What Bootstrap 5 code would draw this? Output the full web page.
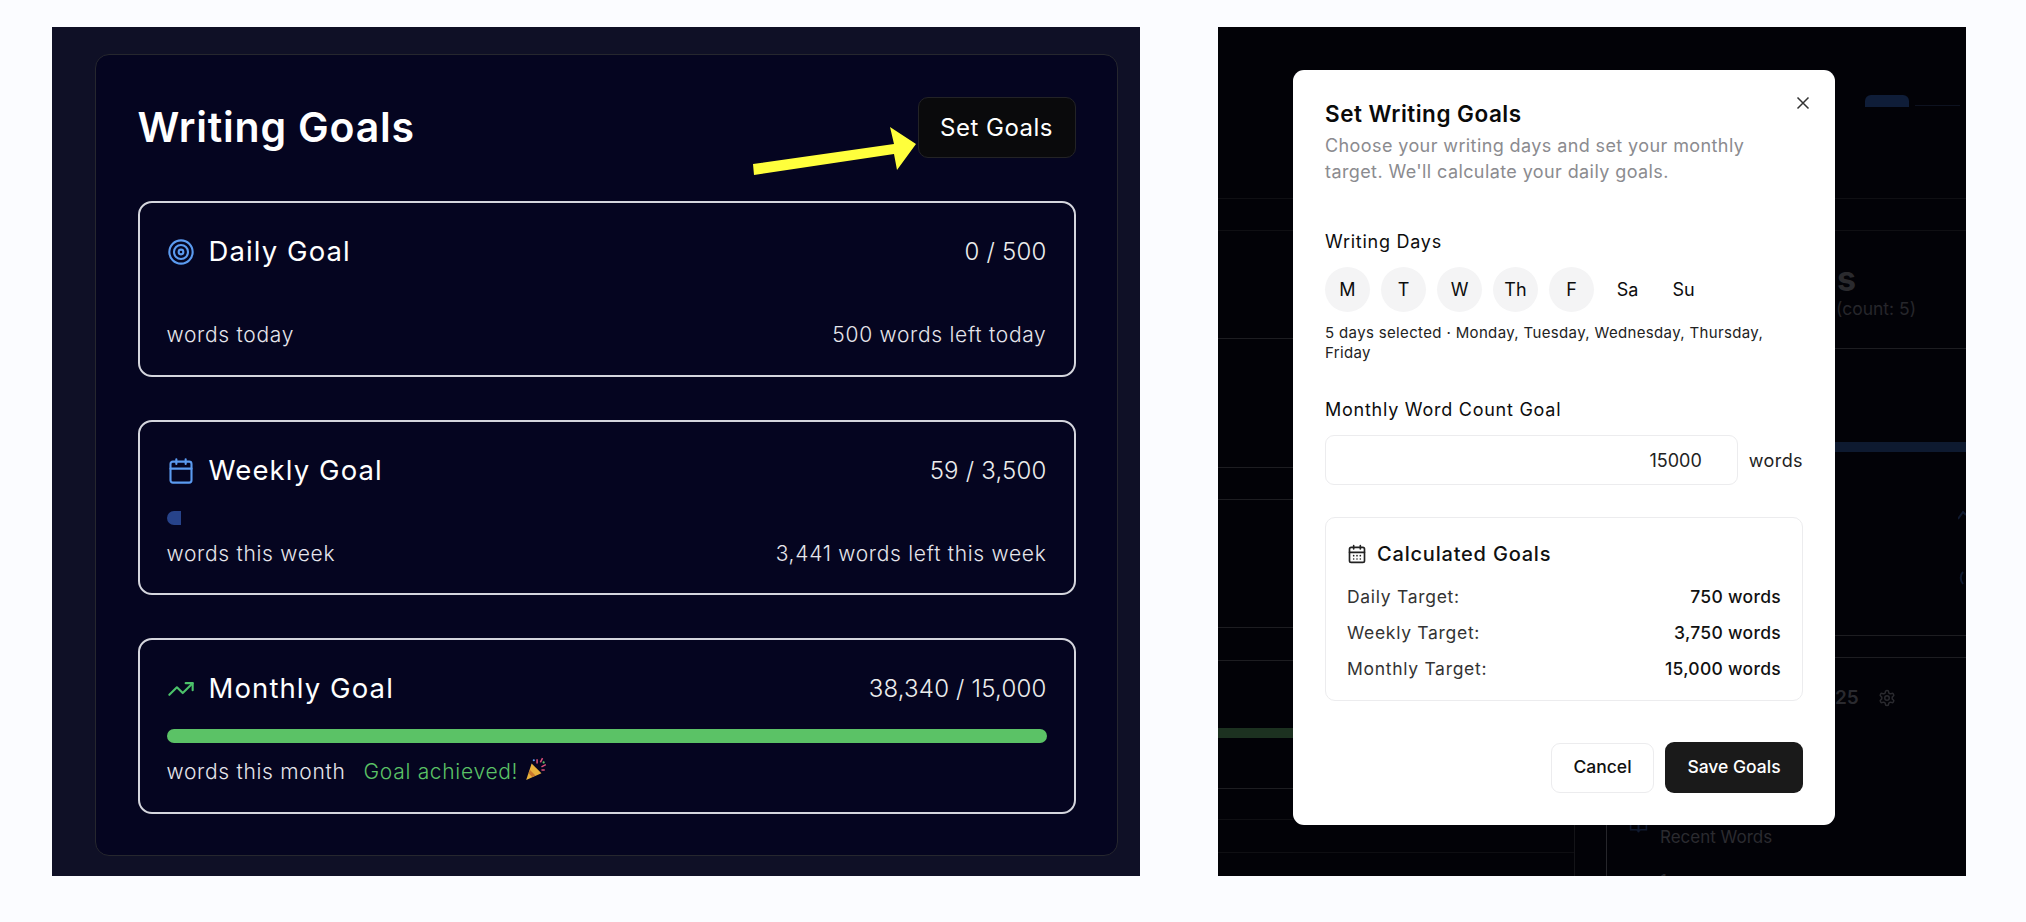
<!DOCTYPE html>
<html lang="en">
<head>
    <meta charset="UTF-8">
    <meta name="viewport" content="width=device-width, initial-scale=1.0">
    <title>Writing Goals</title>
    <link href="https://cdn.jsdelivr.net/npm/bootstrap@5.3.2/dist/css/bootstrap.min.css" rel="stylesheet">
    <style>
        body { background: #fbfcff; font-family: Inter, "Liberation Sans", sans-serif; }
        .shot-row { padding: 27px 0 0 52px; gap: 78px; }

        /* left panel */
        .goals-panel { width: 1088px; height: 849px; background: #0f1026; padding: 27px 22px 20px 43px; flex-shrink: 0; }
        .goals-inner { position: relative; height: 802px; background: #050520; border: 1.5px solid #26272e; border-radius: 14px; padding: 42px 41.5px 0; }
        .goals-title { font-size: 41px; font-weight: 600; color: #fff; margin: 0; letter-spacing: .8px; }
        .set-btn { width: 158px; height: 61px; background: #0a0a0c; border: 1.5px solid #232326; border-radius: 10px; color: #fff; font-size: 24px; font-weight: 400; padding: 0; letter-spacing: .5px; }
        .set-btn:hover { background: #0a0a0c; color: #fff; border-color: #232326; }
        .arrow-note { position: absolute; left: 653px; top: 70px; }
        .goal-box { height: 175.5px; margin-top: 43px; border: 2px solid #d5d6dd; border-radius: 14px; padding: 27px 27px 0; color: #fff; }
        .goal-head { height: 44px; }
        .goal-name { font-size: 27.5px; font-weight: 400; margin-left: 14px; letter-spacing: 1.1px; }
        .goal-count { font-size: 24px; font-weight: 300; color: #eceded; letter-spacing: .2px; }
        .goal-bar { height: 14px; margin-top: 18px; background: transparent; border-radius: 7px; }
        .bar-blue { background: #27438a; }
        .bar-green { background: #5bc266; }
        .goal-foot { height: 30px; margin-top: 14px; font-size: 21px; font-weight: 300; color: #e6e6ec; letter-spacing: .7px; }
        .goal-done { color: #5bc266; margin-left: 18px; }
        .popper { margin-left: 7px; margin-top: -6px; }

        /* right panel */
        .dim-panel { width: 748px; height: 849px; background: #020207; overflow: hidden; flex-shrink: 0; }
        .dim-left { width: 75px; }
        .dim-right { width: 131px; color: #2a2a2f; }
        .dim-mid { width: 542px; padding-top: 43px; }
        .ln { border-bottom: 1px solid #1d1d21; }
        .ln-soft { border-bottom: 1px solid #0f0f13; }
        .band-green { height: 10px; background: #1c3120; }
        .band-blue { height: 10px; background: #0e1a30; }
        .h-22 { height: 22px; } .h-31 { height: 31px; } .h-32 { height: 32px; } .h-33 { height: 33px; }
        .h-51 { height: 51px; } .h-67 { height: 67px; } .h-92 { height: 92px; } .h-93 { height: 93px; }
        .h-108 { height: 108px; } .h-118 { height: 118px; } .h-128 { height: 128px; } .h-129 { height: 129px; }
        .h-172 { height: 172px; } .h-184 { height: 184px; }
        .tab-row { height: 80px; padding: 68px 0 0 30px; }
        .tab-blue { width: 44px; height: 12px; background: #0f1d38; border-radius: 6px 6px 0 0; }
        .tab-line { width: 45px; height: 1px; background: #0d1220; margin: 10px 0 0 6px; }
        .dim-big { font-size: 34px; font-weight: 700; line-height: 1; padding: 31px 0 0 2px; color: #2a2a2e; }
        .dim-sub { font-size: 17.5px; line-height: 1.2; margin-top: 2px; padding-left: 1px; color: #26262b; }
        .dim-stat { font-size: 19px; font-weight: 600; padding-top: 26px; gap: 19px; color: #2a2a2f; }
        .dim-mark { padding: 58px 0 0 123px; }
        .dim-strip { height: 51px; overflow: hidden; }
        .strip-a { width: 281px; height: 28px; border-bottom: 1px solid #0e0e12; }
        .strip-b { width: 32px; border-left: 1px solid #141418; }
        .strip-c { border-left: 1px solid #26262b; padding-left: 22px; gap: 12px; color: #2b2b30; font-size: 17px; }
        .strip-num { margin-top: 18px; }

        /* modal */
        .goals-modal { height: 755px; background: #fff; border: 0; border-radius: 11px; padding: 32px; color: #111; position: relative; }
        .close-x { position: absolute; right: 25px; top: 26px; background: none; border: 0; padding: 0; line-height: 0; }
        .modal-name { font-size: 22.5px; font-weight: 600; line-height: 24px; margin: 0; color: #0a0a0a; letter-spacing: .5px; }
        .modal-desc { font-size: 18px; line-height: 26px; color: #8b8b8f; margin: 7px 0 0; letter-spacing: .4px; }
        .field-label { font-size: 18px; font-weight: 400; line-height: 24px; color: #0d0d0d; letter-spacing: .75px; }
        .days-label { margin-top: 45px; }
        .days-row { gap: 11px; margin-top: 13px; }
        .day-dot { width: 45px; height: 45px; border-radius: 50%; font-size: 18px; font-weight: 400; color: #0d0d0d; }
        .day-on { background: #f4f4f5; }
        .days-note { font-size: 15px; line-height: 20px; margin-top: 11px; color: #222; letter-spacing: .35px; }
        .count-label { margin-top: 35px; }
        .count-row { margin-top: 13px; gap: 11px; }
        .count-input { width: 413px; height: 50px; border: 1.5px solid #ececee; border-radius: 9px; text-align: right; padding-right: 35px; font-size: 18px; color: #222; background: #fff; }
        .count-unit { font-size: 18px; color: #222; letter-spacing: .4px; }
        .calc-box { height: 186px; margin-top: 32px; border: 1.5px solid #ececee; border-radius: 10px; padding: 22px 21px 0; }
        .calc-name { font-size: 20px; font-weight: 500; gap: 10px; line-height: 28px; margin-bottom: 11px; letter-spacing: .8px; }
        .calc-line { height: 36px; font-size: 17.5px; color: #333; letter-spacing: .7px; }
        .calc-line b { font-weight: 500; color: #111; letter-spacing: .3px; }
        .modal-btns { gap: 11px; margin-top: 41px; }
        .btn-cancel { width: 103px; height: 50px; background: #fff; border: 1.5px solid #ececee; border-radius: 9px; font-size: 17.5px; font-weight: 500; color: #111; padding: 0; }
        .btn-save { width: 138px; height: 51px; background: #1a1a1a; border: 0; border-radius: 9px; font-size: 17.5px; font-weight: 500; color: #fff; padding: 0; }
    </style>
</head>
<body>
    <div class="d-flex shot-row">
        <!-- Writing goals panel -->
        <div class="goals-panel">
            <div class="goals-inner">
                <div class="d-flex justify-content-between align-items-center">
                    <h1 class="goals-title">Writing Goals</h1>
                    <button class="btn set-btn">Set Goals</button>
                </div>
                <svg class="arrow-note" width="170" height="50" viewBox="750 125 170 50"><polygon fill="#ffff3c" points="754,164 895,144 891,127 917,144 898,170 895,154 755,175"/></svg>

                <div class="goal-box">
                    <div class="d-flex justify-content-between align-items-center goal-head">
                        <div class="d-flex align-items-center">
                            <svg width="28" height="28" viewBox="0 0 24 24" fill="none" stroke="#5b9bf0" stroke-width="1.800"><circle cx="12" cy="12" r="10"/><circle cx="12" cy="12" r="6"/><circle cx="12" cy="12" r="2"/></svg>
                            <span class="goal-name">Daily Goal</span>
                        </div>
                        <span class="goal-count">0 / 500</span>
                    </div>
                    <div class="progress goal-bar"></div>
                    <div class="d-flex justify-content-between align-items-center goal-foot">
                        <span>words today</span>
                        <span>500 words left today</span>
                    </div>
                </div>

                <div class="goal-box">
                    <div class="d-flex justify-content-between align-items-center goal-head">
                        <div class="d-flex align-items-center">
                            <svg width="28" height="28" viewBox="0 0 24 24" fill="none" stroke="#5b9bf0" stroke-width="1.800" stroke-linecap="round" stroke-linejoin="round"><path d="M8 2v4M16 2v4"/><rect x="3" y="4" width="18" height="18" rx="2"/><path d="M3 10h18"/></svg>
                            <span class="goal-name">Weekly Goal</span>
                        </div>
                        <span class="goal-count">59 / 3,500</span>
                    </div>
                    <div class="progress goal-bar">
                        <div class="progress-bar bar-blue" style="width: 1.7%"></div>
                    </div>
                    <div class="d-flex justify-content-between align-items-center goal-foot">
                        <span>words this week</span>
                        <span>3,441 words left this week</span>
                    </div>
                </div>

                <div class="goal-box">
                    <div class="d-flex justify-content-between align-items-center goal-head">
                        <div class="d-flex align-items-center">
                            <svg width="28" height="28" viewBox="0 0 24 24" fill="none" stroke="#4cc26a" stroke-width="1.800" stroke-linecap="round" stroke-linejoin="round"><path d="M22 7l-8.500 8.500-5-5L2 17"/><path d="M16 7h6v6"/></svg>
                            <span class="goal-name">Monthly Goal</span>
                        </div>
                        <span class="goal-count">38,340 / 15,000</span>
                    </div>
                    <div class="progress goal-bar">
                        <div class="progress-bar bar-green" style="width: 100%"></div>
                    </div>
                    <div class="d-flex align-items-center goal-foot">
                        <span>words this month</span>
                        <span class="goal-done">Goal achieved!</span>
                        <svg class="popper" width="22" height="24" viewBox="0 0 20 22"><path fill="#e8b23c" d="M6 6l9 9-14 6z"/><path fill="#c9772c" d="M4.500 12l5 5-3 1.300-3.300-3.300z"/><path d="M11 2v4M16 1l-2 4M19 7l-4 2M18 12h-3" stroke="#d94f7a" stroke-width="1.400" fill="none"/><circle cx="8" cy="3" r="1" fill="#5b9bf0"/><circle cx="17" cy="5" r="1" fill="#5bc266"/></svg>
                    </div>
                </div>
            </div>
        </div>

        <!-- Set goals dialog over the dimmed page -->
        <div class="dim-panel d-flex">
            <div class="dim-left flex-shrink-0">
                <div class="h-172 ln-soft"></div>
                <div class="h-32 ln-soft"></div>
                <div class="h-108 ln"></div>
                <div class="h-129 ln"></div>
                <div class="h-32 ln"></div>
                <div class="h-128 ln"></div>
                <div class="h-33 ln"></div>
                <div class="h-67"></div>
                <div class="band-green"></div>
                <div class="h-51 ln"></div>
                <div class="h-31 ln-soft"></div>
                <div class="h-33 ln-soft"></div>
            </div>

            <div class="dim-mid flex-shrink-0">
                <div class="modal-content goals-modal">
                    <button class="close-x" aria-label="Close">
                        <svg width="14" height="14" viewBox="0 0 14 14" fill="none" stroke="#333" stroke-width="1.500"><path d="M1.500 1.500l11 11M12.500 1.500l-11 11"/></svg>
                    </button>
                    <h2 class="modal-name">Set Writing Goals</h2>
                    <p class="modal-desc">Choose your writing days and set your monthly<br>target. We'll calculate your daily goals.</p>

                    <div class="field-label days-label">Writing Days</div>
                    <div class="d-flex days-row">
                        <div class="day-dot day-on d-flex align-items-center justify-content-center">M</div>
                        <div class="day-dot day-on d-flex align-items-center justify-content-center">T</div>
                        <div class="day-dot day-on d-flex align-items-center justify-content-center">W</div>
                        <div class="day-dot day-on d-flex align-items-center justify-content-center">Th</div>
                        <div class="day-dot day-on d-flex align-items-center justify-content-center">F</div>
                        <div class="day-dot d-flex align-items-center justify-content-center">Sa</div>
                        <div class="day-dot d-flex align-items-center justify-content-center">Su</div>
                    </div>
                    <div class="days-note">5 days selected · Monday, Tuesday, Wednesday, Thursday,<br>Friday</div>

                    <div class="field-label count-label">Monthly Word Count Goal</div>
                    <div class="d-flex align-items-center count-row">
                        <input type="text" class="form-control count-input" value="15000">
                        <span class="count-unit">words</span>
                    </div>

                    <div class="calc-box">
                        <div class="d-flex align-items-center calc-name">
                            <svg width="20" height="20" viewBox="0 0 24 24" fill="none" stroke="#222" stroke-width="2" stroke-linecap="round" stroke-linejoin="round"><path d="M8 2v4M16 2v4"/><rect x="3" y="4" width="18" height="18" rx="2"/><path d="M3 10h18M8 14h.01M12 14h.01M16 14h.01M8 18h.01M12 18h.01M16 18h.01"/></svg>
                            <span>Calculated Goals</span>
                        </div>
                        <div class="d-flex justify-content-between align-items-center calc-line"><span>Daily Target:</span><b>750 words</b></div>
                        <div class="d-flex justify-content-between align-items-center calc-line"><span>Weekly Target:</span><b>3,750 words</b></div>
                        <div class="d-flex justify-content-between align-items-center calc-line"><span>Monthly Target:</span><b>15,000 words</b></div>
                    </div>

                    <div class="d-flex justify-content-end align-items-center modal-btns">
                        <button class="btn btn-cancel">Cancel</button>
                        <button class="btn btn-save">Save Goals</button>
                    </div>
                </div>
                <div class="d-flex dim-strip">
                    <div class="strip-a"></div>
                    <div class="strip-b"></div>
                    <div class="strip-c d-flex">
                        <svg width="19" height="19" viewBox="0 0 24 24" fill="none" stroke="#101a30" stroke-width="2" class="d-block"><path d="M2 -9h6a4 4 0 0 1 4 4v14a3 3 0 0 0-3-3H2z"/><path d="M22 -9h-6a4 4 0 0 0-4 4v14a3 3 0 0 1 3-3h7z"/></svg>
                        <div>
                            <div>Recent Words</div>
                            <div class="strip-num">1</div>
                        </div>
                    </div>
                </div>
            </div>

            <div class="dim-right flex-shrink-0">
                <div class="d-flex tab-row">
                    <div class="tab-blue"></div>
                    <div class="tab-line"></div>
                </div>
                <div class="h-92 ln-soft"></div>
                <div class="h-32 ln-soft"></div>
                <div class="h-118 ln">
                    <div class="dim-big">s</div>
                    <div class="dim-sub">(count: 5)</div>
                </div>
                <div class="h-93"></div>
                <div class="band-blue"></div>
                <div class="h-184 ln dim-mark">
                    <svg width="8" height="76" viewBox="0 0 8 76" fill="none" stroke="#101a30" stroke-width="2" class="d-block"><path d="M0 9l5-7 3 3M5 62c-3 3-3 8 0 12"/></svg>
                </div>
                <div class="h-22 ln"></div>
                <div class="d-flex align-items-center dim-stat">
                    <span>25</span>
                    <svg width="18" height="18" viewBox="0 0 24 24" fill="none" stroke="#2a2a2f" stroke-width="2" stroke-linecap="round" stroke-linejoin="round"><path d="M12.220 2h-.44a2 2 0 0 0-2 2v.18a2 2 0 0 1-1 1.730l-.43.250a2 2 0 0 1-2 0l-.15-.08a2 2 0 0 0-2.730.730l-.22.380a2 2 0 0 0 .730 2.730l.15.100a2 2 0 0 1 1 1.720v.510a2 2 0 0 1-1 1.740l-.15.090a2 2 0 0 0-.730 2.730l.22.380a2 2 0 0 0 2.730.730l.15-.08a2 2 0 0 1 2 0l.43.250a2 2 0 0 1 1 1.730V20a2 2 0 0 0 2 2h.44a2 2 0 0 0 2-2v-.18a2 2 0 0 1 1-1.730l.43-.25a2 2 0 0 1 2 0l.15.080a2 2 0 0 0 2.730-.730l.22-.39a2 2 0 0 0-.730-2.730l-.15-.08a2 2 0 0 1-1-1.740v-.5a2 2 0 0 1 1-1.740l.15-.09a2 2 0 0 0 .730-2.730l-.22-.38a2 2 0 0 0-2.730-.730l-.15.080a2 2 0 0 1-2 0l-.43-.25a2 2 0 0 1-1-1.730V4a2 2 0 0 0-2-2z"/><circle cx="12" cy="12" r="3"/></svg>
                </div>
            </div>
        </div>
    </div>

    <script src="https://cdn.jsdelivr.net/npm/bootstrap@5.3.2/dist/js/bootstrap.bundle.min.js"></script>
</body>
</html>
